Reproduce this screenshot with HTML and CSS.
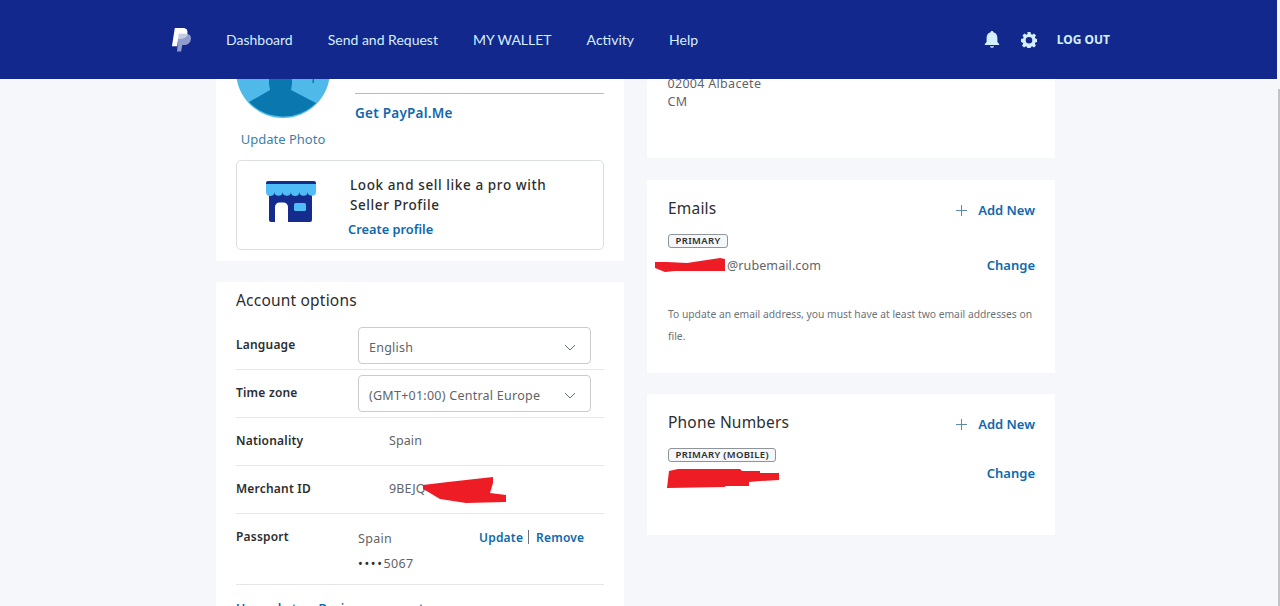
FILE: index.html
```html
<!DOCTYPE html>
<html lang="en">
<head>
<meta charset="utf-8">
<title>PayPal Profile</title>
<link rel="stylesheet" href="styles.css">
</head>
<body>
<header class="topbar">
  <svg class="logo" viewBox="0 0 22 26" width="21" height="25" aria-hidden="true">
    <path fill="#8f9cce" d="M8 7h7.500c4 0 6 2.400 5.300 6-.7 3.800-3.600 5.800-7 5.800h-2L10.600 25.500H6.300z"/>
    <path fill="#ffffff" d="M4 1h8c3.800 0 5.800 2 5.200 5.300C16.500 10.500 13.400 12 9.800 12H7.600L6.300 20H1z"/>
    <path fill="#c3cbe6" d="M8 7h9.300c.3 3-3 5-7.500 5H7.600z"/>
  </svg>
  <nav class="nav">
    <a>Dashboard</a>
    <a>Send and Request</a>
    <a>MY WALLET</a>
    <a>Activity</a>
    <a>Help</a>
  </nav>
  <div class="tools">
    <svg class="bell" viewBox="0 0 16 18" width="16" height="18" aria-hidden="true">
      <path fill="#d4efff" d="M8 0c.8 0 1.300.5 1.400 1.200C12 1.900 13.400 4 13.400 7v3.600c0 1 .9 1.500 1.700 2.500.3.400.1 1-.5 1H1.400c-.6 0-.8-.6-.5-1 .8-1 1.700-1.500 1.700-2.500V7c0-3 1.400-5.100 4-5.800C6.700.5 7.200 0 8 0z"/>
      <path fill="#d4efff" d="M6 15.300h4c-.3 1-1 1.500-2 1.500s-1.700-.5-2-1.500z"/>
    </svg>
    <svg class="gear" viewBox="0 0 16 16" width="16" height="16" aria-hidden="true">
      <path fill="#d4efff" fill-rule="evenodd" d="M6.500 0h3l.4 2.100 1.300.6L13 1.500l2 2-1.200 1.800.6 1.300 2.100.4v3l-2.100.4-.6 1.300 1.200 1.800-2 2-1.800-1.200-1.300.6-.4 2.100h-3l-.4-2.100-1.300-.6L3 15.500l-2-2 1.200-1.800-.6-1.300L0 10V7l2.100-.4.6-1.300L1.500 3.500l2-2 1.800 1.200 1.300-.6zM8 5a3.300 3.300 0 1 0 0 6.600A3.300 3.300 0 0 0 8 5z"/>
    </svg>
    <a class="logout">LOG OUT</a>
  </div>
</header>

<div class="scrollthumb"></div>

<main class="page">
  <div class="column">
    <section class="card profile">
      <div class="profile-top">
        <div class="photo">
          <svg class="avatar" viewBox="0 0 94 94" width="94" height="94" aria-hidden="true">
            <circle cx="47" cy="47" r="47" fill="#4fbaea"/>
            <path fill="#0a78ae" d="M33 30H56V60L55 66 80 79A47 47 0 0 1 13 78L34 66 33 60z"/>
            <rect x="76.500" y="55" width="1.500" height="4" fill="#0a78ae"/>
          </svg>
          <a class="update-photo">Update Photo</a>
        </div>
        <div class="paypalme">
          <a class="get-me">Get PayPal.Me</a>
        </div>
      </div>
      <div class="seller">
        <svg class="store" viewBox="0 0 50 42" width="50" height="42" aria-hidden="true">
          <path fill="#142c8e" d="M3 10h43v29a2 2 0 0 1-2 2H22V26a4.500 4.500 0 0 0-4.500-4.500h-4A4.500 4.500 0 0 0 9 26v15H5a2 2 0 0 1-2-2z"/>
          <rect x="28" y="22" width="12" height="8" rx="1.500" fill="#4fbcf5"/>
          <path fill="#4fbcf5" d="M0 2h50v9a4.170 4 0 0 1-8.330 0 4.170 4 0 0 1-8.330 0 4.170 4 0 0 1-8.340 0 4.170 4 0 0 1-8.330 0 4.170 4 0 0 1-8.330 0A4.170 4 0 0 1 0 11z"/>
          <path fill="#142c8e" d="M2 0h46a2 2 0 0 1 2 2v1H0V2a2 2 0 0 1 2-2z"/>
        </svg>
        <div class="seller-text">
          <p class="seller-title">Look and sell like a pro with<br>Seller Profile</p>
          <a class="create">Create profile</a>
        </div>
      </div>
    </section>

    <section class="card options">
      <h2 class="title">Account options</h2>
      <div class="row row-select">
        <span class="label">Language</span>
        <div class="select"><span>English</span><svg class="chev" viewBox="0 0 12 7" width="12" height="7" aria-hidden="true"><path d="M1 1l5 5 5-5" fill="none" stroke="#6c7378"/></svg></div>
      </div>
      <div class="row row-select">
        <span class="label">Time zone</span>
        <div class="select"><span>(GMT+01:00) Central Europe</span><svg class="chev" viewBox="0 0 12 7" width="12" height="7" aria-hidden="true"><path d="M1 1l5 5 5-5" fill="none" stroke="#6c7378"/></svg></div>
      </div>
      <div class="row row-text">
        <span class="label">Nationality</span>
        <span class="value">Spain</span>
      </div>
      <div class="row row-text">
        <span class="label">Merchant ID</span>
        <span class="value value-id">9BEJQ
          <svg class="scrib scrib-id" viewBox="0 0 84 26" width="84" height="26" aria-hidden="true"><path fill="#ee1c25" d="M0 8 25 5 70 0 70 6 67 16 83 18 83 25 43 26 17 22 7 16 0 12z"/></svg>
        </span>
      </div>
      <div class="row row-passport">
        <span class="label">Passport</span>
        <div class="passport-val">
          <span>Spain</span>
          <span><span class="dots">••••</span>5067</span>
        </div>
        <div class="passport-act"><a>Update</a><i class="pipe"></i><a>Remove</a></div>
      </div>
      <a class="upgrade">Upgrade to a Business account</a>
    </section>
  </div>

  <div class="column">
    <section class="card address">
      <p class="addr">02004 Albacete<br>CM</p>
    </section>

    <section class="card emails">
      <div class="head">
        <h2 class="title">Emails</h2>
        <a class="add"><svg viewBox="0 0 11 11" width="11" height="11" aria-hidden="true"><path d="M5.500 0v11M0 5.500h11" stroke="#5b8aa8" fill="none"/></svg><span>Add New</span></a>
      </div>
      <span class="badge">PRIMARY</span>
      <div class="entry">
        <span class="email"><svg class="scrib scrib-mail" viewBox="0 0 70 14" width="70" height="14" aria-hidden="true"><path fill="#ee1c25" d="M0 4 12 4 32 5 65 0 70 1V13L20 13 10 14 0 10z"/></svg>@rubemail.com</span>
        <a class="link">Change</a>
      </div>
      <p class="note">To update an email address, you must have at least two email addresses on file.</p>
    </section>

    <section class="card phones">
      <div class="head">
        <h2 class="title">Phone Numbers</h2>
        <a class="add"><svg viewBox="0 0 11 11" width="11" height="11" aria-hidden="true"><path d="M5.500 0v11M0 5.500h11" stroke="#5b8aa8" fill="none"/></svg><span>Add New</span></a>
      </div>
      <span class="badge">PRIMARY (MOBILE)</span>
      <div class="entry entry-phone">
        <svg class="scrib-phone" viewBox="0 0 113 19" width="113" height="19" aria-hidden="true"><path fill="#ee1c25" d="M0 19 2 2 11 0 73 0 75 2 93 2 93 4 112 4 112 11 93 12 82 13 82 17 58 17 58 18z"/></svg>
        <a class="link">Change</a>
      </div>
    </section>
  </div>
</main>
</body>
</html>
```

FILE: styles.css
```css
* { box-sizing: border-box; }
html, body { height: 100%; }
body {
  margin: 0;
  height: 606px;
  overflow: hidden;
  background: #f5f7fa;
  color: #2c2e2f;
  font-family: "Noto Sans", "Open Sans", sans-serif;
  font-size: 13px;
}
p, h2 { margin: 0; }
a { color: #0f68ad; }

.topbar {
  position: fixed;
  top: 0;
  left: 0;
  width: 1277px;
  height: 79px;
  background: #13288c;
  display: flex;
  align-items: center;
  padding: 0 0 0 171px;
}
.logo { flex: none; }
.nav {
  display: flex;
  gap: 35px;
  margin-left: 34px;
  font-family: "Lato", "Noto Sans", sans-serif;
  font-size: 14px;
}
.nav a { color: #d4efff; }
.tools {
  margin-left: auto;
  margin-right: 167px;
  display: flex;
  align-items: center;
}
.gear { margin-left: 21px; }
.logout {
  margin-left: 20px;
  color: #d4efff;
  font-size: 12px;
  font-weight: 700;
}
.scrollthumb {
  position: fixed;
  right: 0;
  top: 89px;
  width: 2px;
  height: 517px;
  background: #c4c4c4;
}

.page {
  display: flex;
  gap: 23px;
  padding-left: 216px;
}
.column {
  width: 408px;
  display: flex;
  flex-direction: column;
  gap: 21px;
}
.card { background: #fff; }

.profile {
  height: 261px;
  padding: 24px 20px 0;
}
.profile-top {
  display: flex;
  height: 136px;
}
.photo {
  width: 94px;
  display: flex;
  flex-direction: column;
  align-items: center;
}
.avatar { flex: none; }
.update-photo {
  margin-top: 12px;
  white-space: nowrap;
  color: #3d7fa8;
  font-size: 13px;
  letter-spacing: 0;
  line-height: 18px;
}
.paypalme {
  margin-left: 25px;
  width: 249px;
  height: 103px;
  padding-top: 69px;
}
.get-me {
  display: block;
  border-top: 1px solid #b7bcbf;
  padding-top: 9px;
  font-size: 13.500px;
  font-weight: 600;
  letter-spacing: .25px;
  line-height: 20px;
}
.seller {
  width: 368px;
  height: 90px;
  border: 1px solid #dcdfe1;
  border-radius: 5px;
  display: flex;
  align-items: flex-start;
  padding: 20px 0 0 29px;
}
.store { flex: none; }
.seller-text { margin: -6px 0 0 32px; }
.seller-title {
  margin-left: 2px;
  font-size: 13.500px;
  font-weight: 500;
  line-height: 20px;
  letter-spacing: .6px;
}
.create {
  display: block;
  margin-top: 4px;
  font-size: 12.800px;
  font-weight: 600;
  line-height: 20px;
}

.options {
  height: 400px;
  padding: 7px 20px 0;
}
.title {
  font-size: 15.500px;
  font-weight: 400;
  line-height: 22px;
  letter-spacing: .2px;
}
.options .title { margin-bottom: 16px; }
.row {
  display: flex;
  border-bottom: 1px solid #e4e6e7;
}
.label {
  width: 122px;
  flex: none;
  font-size: 12px;
  font-weight: 600;
  letter-spacing: .2px;
}
.row-select { height: 43px; }
.row-select .label { line-height: 36px; }
.row-select + .row-select {
  height: 48px;
  padding-top: 5px;
}
.select {
  width: 233px;
  height: 37px;
  border: 1px solid #c9ccce;
  border-radius: 4px;
  display: flex;
  align-items: center;
  justify-content: space-between;
  padding: 3px 14px 0 10px;
  color: #5f6468;
  font-size: 12.500px;
  letter-spacing: .25px;
}
.chev { flex: none; }
.row-text {
  height: 48px;
  align-items: center;
}
.row-text .label { margin-top: -2px; }
.value {
  margin: -2px 0 0 31px;
  color: #5f6468;
  font-size: 12.500px;
  letter-spacing: .1px;
  position: relative;
}
.scrib { position: absolute; }
.scrib-id { left: 34px; top: -3px; }
.row-passport {
  height: 71px;
  padding-top: 13px;
}
.row-passport .label { line-height: 20px; }
.passport-val {
  display: flex;
  flex-direction: column;
  gap: 5px;
  color: #5f6468;
  font-size: 12.500px;
  letter-spacing: .3px;
  line-height: 20px;
  padding-top: 2px;
  width: 121px;
}
.dots {
  color: #2c2e2f;
  letter-spacing: 1.700px;
}
.passport-act {
  display: flex;
  align-items: center;
  height: 20px;
  font-size: 12px;
  font-weight: 600;
  letter-spacing: .2px;
}
.pipe {
  display: block;
  width: 1px;
  height: 14px;
  background: #6c7378;
  margin: 0 7px 0 5px;
}
.upgrade {
  display: block;
  margin-top: 15px;
  font-size: 12.500px;
  font-weight: 600;
  white-space: nowrap;
  line-height: 18px;
}

.address {
  height: 158px;
  padding: 75px 20.500px 0;
}
.addr {
  color: #5f6468;
  font-size: 12.500px;
  line-height: 18px;
  letter-spacing: .3px;
}
.emails {
  height: 193px;
  margin-top: 1px;
  padding: 17px 20px 0 21px;
}
.phones {
  height: 141px;
  padding: 17px 20px 0 21px;
}
.head {
  display: flex;
  justify-content: space-between;
  align-items: center;
  height: 22px;
  margin-bottom: 15px;
}
.add {
  display: flex;
  align-items: center;
  gap: 11px;
  margin-top: 4px;
  font-size: 13px;
  font-weight: 600;
}
.badge {
  display: block;
  width: fit-content;
  height: 14px;
  padding: 0 6.500px;
  border: 1px solid #8f9498;
  border-radius: 3px;
  background: #f5f7fa;
  font-size: 9.500px;
  font-weight: 600;
  line-height: 12px;
  letter-spacing: .35px;
}
.entry {
  display: flex;
  justify-content: space-between;
  align-items: center;
  height: 20px;
  margin-top: 7px;
}
.email {
  position: relative;
  padding-left: 59px;
  color: #5f6468;
  font-size: 12.500px;
  letter-spacing: .1px;
}
.scrib-mail { left: -13px; top: 1px; }
.link {
  font-size: 13px;
  font-weight: 600;
}
.note {
  margin-top: 28px;
  color: #6c7378;
  font-size: 10.300px;
  line-height: 22px;
  letter-spacing: 0;
}
.entry-phone {
  align-items: flex-start;
  height: 30px;
  margin-top: 2px;
}
.scrib-phone { margin-top: 5px; margin-left: -1px; }
.entry-phone .link { margin-top: 0; }
```
